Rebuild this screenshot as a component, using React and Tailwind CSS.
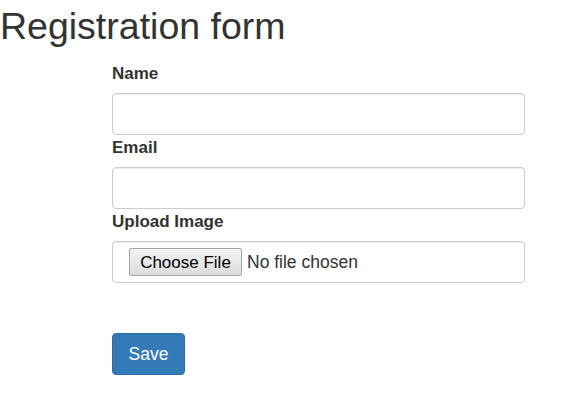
export default function App() {
  const font = { fontFamily: '"Liberation Sans", Arial, sans-serif' }
  return (
    <div className="min-h-[411px] w-[580px] bg-white text-[#333]" style={font}>
      <h1 className="pt-[6px] text-[37.5px] font-normal leading-[1.1]">Registration form</h1>
      <form className="ml-[112px] mt-[17px] w-[413px]" onSubmit={(e) => e.preventDefault()}>
        <div className="mb-[3px]">
          <label className="mb-[9px] block h-5 text-[17px] font-bold leading-5">Name</label>
          <input
            type="text"
            className="block h-[42px] w-full rounded-[4px] border border-[#ccc] bg-white px-3 shadow-[inset_0_1px_1px_rgba(0,0,0,0.075)] outline-none"
          />
        </div>
        <div className="mb-[3px]">
          <label className="mb-[9px] block h-5 text-[17px] font-bold leading-5">Email</label>
          <input
            type="email"
            className="block h-[42px] w-full rounded-[4px] border border-[#ccc] bg-white px-3 shadow-[inset_0_1px_1px_rgba(0,0,0,0.075)] outline-none"
          />
        </div>
        <div>
          <label className="mb-[9px] block h-5 text-[17px] font-bold leading-5">Upload Image</label>
          <div className="flex h-[42px] w-full items-center rounded-[4px] border border-[#ccc] bg-white pl-[16px] shadow-[inset_0_1px_1px_rgba(0,0,0,0.075)]">
            <span className="flex h-[28px] w-[113px] items-center justify-center rounded-[2px] border border-[#a6a6a6] bg-gradient-to-b from-[#f4f4f4] to-[#dcdcdc] text-[17px] text-black">
              Choose File
            </span>
            <span className="ml-[5px] text-[17.5px] text-[#333]">No file chosen</span>
          </div>
        </div>
        <button
          type="submit"
          className="mt-[50px] flex h-[42px] w-[73px] items-center justify-center rounded-[4px] border border-[#2e6da4] bg-[#337ab7] text-[17.5px] text-white"
        >
          Save
        </button>
      </form>
    </div>
  )
}
